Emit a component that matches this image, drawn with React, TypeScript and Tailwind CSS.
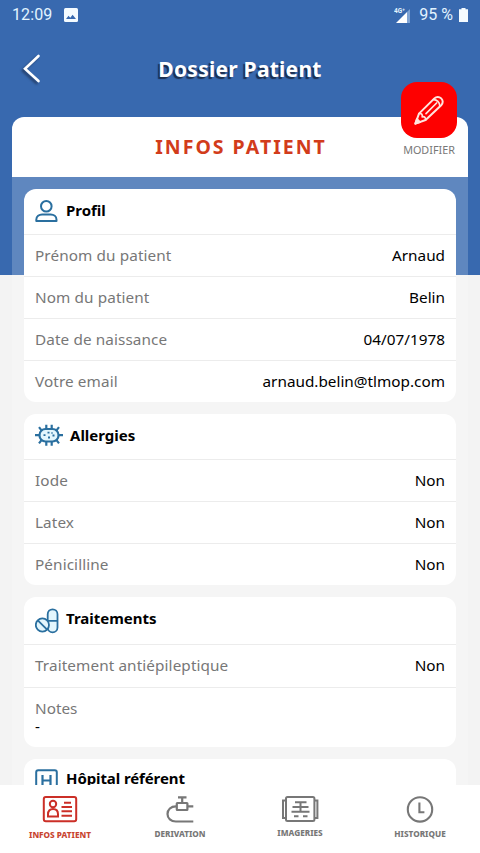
import type { ReactNode } from "react";

const UserIcon = () => (
  <svg width="24" height="24" viewBox="0 0 24 24" fill="none" stroke="#2a6f9f" strokeWidth="2">
    <circle cx="11.3" cy="7.2" r="5.3" />
    <path d="M1.3 21.9v-1.2c0-3.4 2.8-5.2 5.8-5.2h8.6c3 0 5.8 1.8 5.8 5.2v1.2z" strokeLinejoin="round" />
  </svg>
);

const VirusIcon = () => (
  <svg width="28" height="24" viewBox="0 0 28 24" fill="none" stroke="#2a6f9f" strokeWidth="2.2">
    <rect x="4.5" y="6" width="19" height="12.5" rx="6" fill="#e3f6fd" />
    <path d="M0 12.2h4M24 12.2h4M11.3 6V1.8M16.7 6V1.8M11.3 18.5v4.2M16.7 18.5v4.2M6.7 7.7 4 4.2M21.3 7.7 24 4.2M6.7 16.8 4 20.3M21.3 16.8l2.7 3.5" />
    <path d="M8.5 12.2h2M12.5 9.7h2M13 14.5h2M17.5 12.5h2M16.5 10h1" strokeWidth="1.8" />
  </svg>
);

const PillsIcon = () => (
  <svg width="24" height="26" viewBox="0 0 24 26" fill="#e3f6fd" stroke="#2a6f9f" strokeWidth="1.8">
    <rect x="12.7" y="1.3" width="9.8" height="23" rx="4.9" />
    <path d="M12.7 12.8h9.8" />
    <circle cx="7.4" cy="17" r="6.6" />
    <path d="m2.8 12.4 9.3 9.3" />
  </svg>
);

const HospitalIcon = () => (
  <svg width="24" height="24" viewBox="0 0 24 24" fill="none" stroke="#2a6f9f" strokeWidth="2">
    <rect x="1.2" y="1.2" width="20.6" height="20.6" rx="2" />
    <path d="M7.5 6v11M15.5 6v11M7.5 11.5h8" strokeWidth="2.2" />
  </svg>
);

const PencilIcon = () => (
  <svg width="32" height="32" viewBox="0 0 32 32" fill="none" stroke="#ffe5de" strokeWidth="2" strokeLinejoin="round" strokeLinecap="round">
    <path d="M2.4 29.6 6 19.6 21.4 4.4c2-2 4.8-2 6.8 0s2 4.8 0 6.8L12.6 26z" />
    <path d="M6 19.6c2.6-.4 3.6.8 3.2 3.2 2.4-.4 3.6.8 3.4 3.2M13 19.6 23.6 9M20.4 5.6c3.4-.2 6.4 2.8 6.4 6.4" strokeWidth="1.7" />
    <path d="m2.4 29.6 1.5-4.6 3.1 3.1z" fill="#ffe5de" />
  </svg>
);

const IdCardIcon = () => (
  <svg width="36" height="28" viewBox="0 0 36 28" fill="none" stroke="#cb2f27" strokeWidth="2">
    <rect x="1.8" y="1.9" width="32.4" height="24.4" rx="2" />
    <circle cx="11" cy="9" r="3.2" />
    <path d="M6 21.6v-2.4c0-3.4 2.2-5.3 5-5.3s5 1.9 5 5.3v2.4z" />
    <path d="M22 7.8h7M19.5 12h10.5M19.5 16.2h10.5M19.5 20.7h10.5" />
  </svg>
);

const CatheterIcon = () => (
  <svg width="28" height="28" viewBox="0 0 28 28" fill="none" stroke="#777" strokeWidth="2.2">
    <path d="M27.3 26.5H9.8c-4.8 0-8.3-3.2-8.3-7.5 0-4.5 3.4-7.7 8.5-7.7M21.5 11.3h5.8M12 2.4h8.5M16.2 2.4V8" />
    <rect x="10.8" y="8" width="10.6" height="7" rx=".5" />
  </svg>
);

const ScanIcon = () => (
  <svg width="38" height="28" viewBox="0 0 38 28" fill="none" stroke="#777" strokeWidth="2">
    <rect x="5" y="2" width="28.4" height="24" rx="1.5" />
    <path d="M5 5.5H2v17.5h3M33.4 5.5h3v17.5h-3" />
    <path d="M14 7.3h11.5M11.5 12h16M10.5 16.8h18M19.5 7.3v9.5M13 21.3h4.5M22 21.3h4.5" />
  </svg>
);

const ClockIcon = () => (
  <svg width="28" height="28" viewBox="0 0 28 28" fill="none" stroke="#777" strokeWidth="2.1">
    <circle cx="14" cy="14.4" r="12.2" />
    <path d="M13.4 7.5v9.8h5" />
  </svg>
);

type CardProps = {
  icon: ReactNode;
  title: string;
  headerClass?: string;
  titleClass?: string;
  children?: ReactNode;
};

const Card = ({ icon, title, headerClass = "h-[45px] pb-0.5", titleClass = "", children }: CardProps) => (
  <section className="overflow-hidden rounded-xl bg-white">
    <div className={`flex items-center gap-[7px] px-[11px] ${headerClass}`}>
      {icon}
      <h2 className={`text-[15px] font-bold text-black ${titleClass}`}>{title}</h2>
    </div>
    {children}
  </section>
);

type RowProps = {
  label: string;
  value: string;
  heightClass?: string;
};

const Row = ({ label, value, heightClass = "h-[42px]" }: RowProps) => (
  <div className={`flex items-center justify-between border-t border-[#ececec] px-[11px] pb-px text-[15.3px] ${heightClass}`}>
    <span className="tracking-[0.1px] text-[#777]">{label}</span>
    <span className="text-black">{value}</span>
  </div>
);

const tabs = [
  { label: "INFOS PATIENT", icon: <IdCardIcon />, className: "gap-1 text-[#c8442f]" },
  { label: "DERIVATION", icon: <CatheterIcon />, className: "gap-[3px] text-[#777]" },
  { label: "IMAGERIES", icon: <ScanIcon />, className: "gap-0.5 text-[#777]" },
  { label: "HISTORIQUE", icon: <ClockIcon />, className: "gap-[3px] text-[#777]" },
];

const App = () => {
  return (
    <div className="flex h-[853px] w-[480px] flex-col overflow-hidden bg-[linear-gradient(#3869af_275px,#f3f3f3_275px)] font-['Noto_Sans',sans-serif]">
      <div className="flex h-[30px] shrink-0 items-center justify-between pr-3 pl-3 font-['Roboto',sans-serif] text-base text-[#e2f4ff]">
        <div className="flex items-center gap-3">
          <span className="tracking-[0.1px]">12:09</span>
          <svg width="14" height="14" viewBox="0 0 14 14">
            <rect width="14" height="14" rx="1.5" fill="#f4fbff" />
            <path d="m2 11 2.5-3.2 1.8 2 2.3-3L12 11z" fill="#3869af" />
          </svg>
        </div>
        <div className="flex items-center">
          <svg width="17" height="17" viewBox="0 0 17 17" className="mr-2">
            <path d="M2 16 13 5v11z" fill="#fff" />
            <path d="M13 5l3-3v14h-3z" fill="#7fa3d3" />
            <text x="0" y="6" fontSize="6.5" fontWeight="700" fill="#e2f4ff">4G⁺</text>
          </svg>
          <span>95 %</span>
          <svg width="9" height="14" viewBox="0 0 9 14" className="ml-1.5">
            <path d="M0 1.3h2.5V0h4v1.3H9V14H0z" fill="#f4fbff" />
          </svg>
        </div>
      </div>

      <header className="grid h-[87px] shrink-0 grid-cols-[1fr_auto_1fr] items-start px-[22px] pt-6">
        <button aria-label="Retour">
          <svg width="20" height="30" viewBox="0 0 20 30" fill="none" stroke="#fff" strokeWidth="2.6" strokeLinecap="round" className="drop-shadow-[-2px_2px_1px_#24406d]">
            <path d="M16.5 2 3 14.7 16.5 27" />
          </svg>
        </button>
        <h1 className="text-[21px] leading-[30px] font-bold tracking-[0.25px] text-white [text-shadow:-2px_2px_1px_#1c2f50]">
          Dossier Patient
        </h1>
      </header>

      <main className="mx-3 flex min-h-0 flex-1 flex-col">
        <div className="relative flex h-[60px] shrink-0 items-center justify-center rounded-t-xl bg-white">
          <span className="pl-0.5 text-[19.5px] font-bold tracking-[2px] text-[#d23c1b]">INFOS PATIENT</span>
          <button className="absolute -top-[35px] right-[11px] flex w-14 flex-col items-center">
            <span className="flex size-14 items-center justify-center rounded-2xl bg-[#fe0000]">
              <PencilIcon />
            </span>
            <span className="mt-1 text-[10.8px] leading-4 whitespace-nowrap text-[#777]">MODIFIER</span>
          </button>
        </div>

        <div className="flex min-h-0 flex-1 flex-col gap-3 overflow-hidden bg-white/20 px-3 pt-3 *:shrink-0">
          <Card icon={<UserIcon />} title="Profil">
            <Row label="Prénom du patient" value="Arnaud" />
            <Row label="Nom du patient" value="Belin" />
            <Row label="Date de naissance" value="04/07/1978" />
            <Row label="Votre email" value="arnaud.belin@tlmop.com" />
          </Card>
          <Card icon={<VirusIcon />} title="Allergies" headerClass="h-[45px] pb-[3px]">
            <Row label="Iode" value="Non" />
            <Row label="Latex" value="Non" />
            <Row label="Pénicilline" value="Non" />
          </Card>
          <Card icon={<PillsIcon />} title="Traitements" headerClass="h-[47px]" titleClass="pb-1">
            <Row label="Traitement antiépileptique" value="Non" heightClass="h-[43px]" />
            <div className="h-[60px] border-t border-[#ececec] px-[11px] pt-[11px] text-[15.3px] leading-[18px]">
              <p className="text-[#777]">Notes</p>
              <p className="text-black">-</p>
            </div>
          </Card>
          <Card icon={<HospitalIcon />} title="Hôpital référent" titleClass="pb-1 tracking-[-0.1px]" />
        </div>
      </main>

      <nav className="grid h-[68px] shrink-0 grid-cols-4 bg-white pt-[10px]">
        {tabs.map((tab) => (
          <button key={tab.label} className={`flex flex-col items-center ${tab.className}`}>
            {tab.icon}
            <span className="text-[8.2px] leading-4 font-extrabold whitespace-nowrap">{tab.label}</span>
          </button>
        ))}
      </nav>
    </div>
  );
};

export default App;
